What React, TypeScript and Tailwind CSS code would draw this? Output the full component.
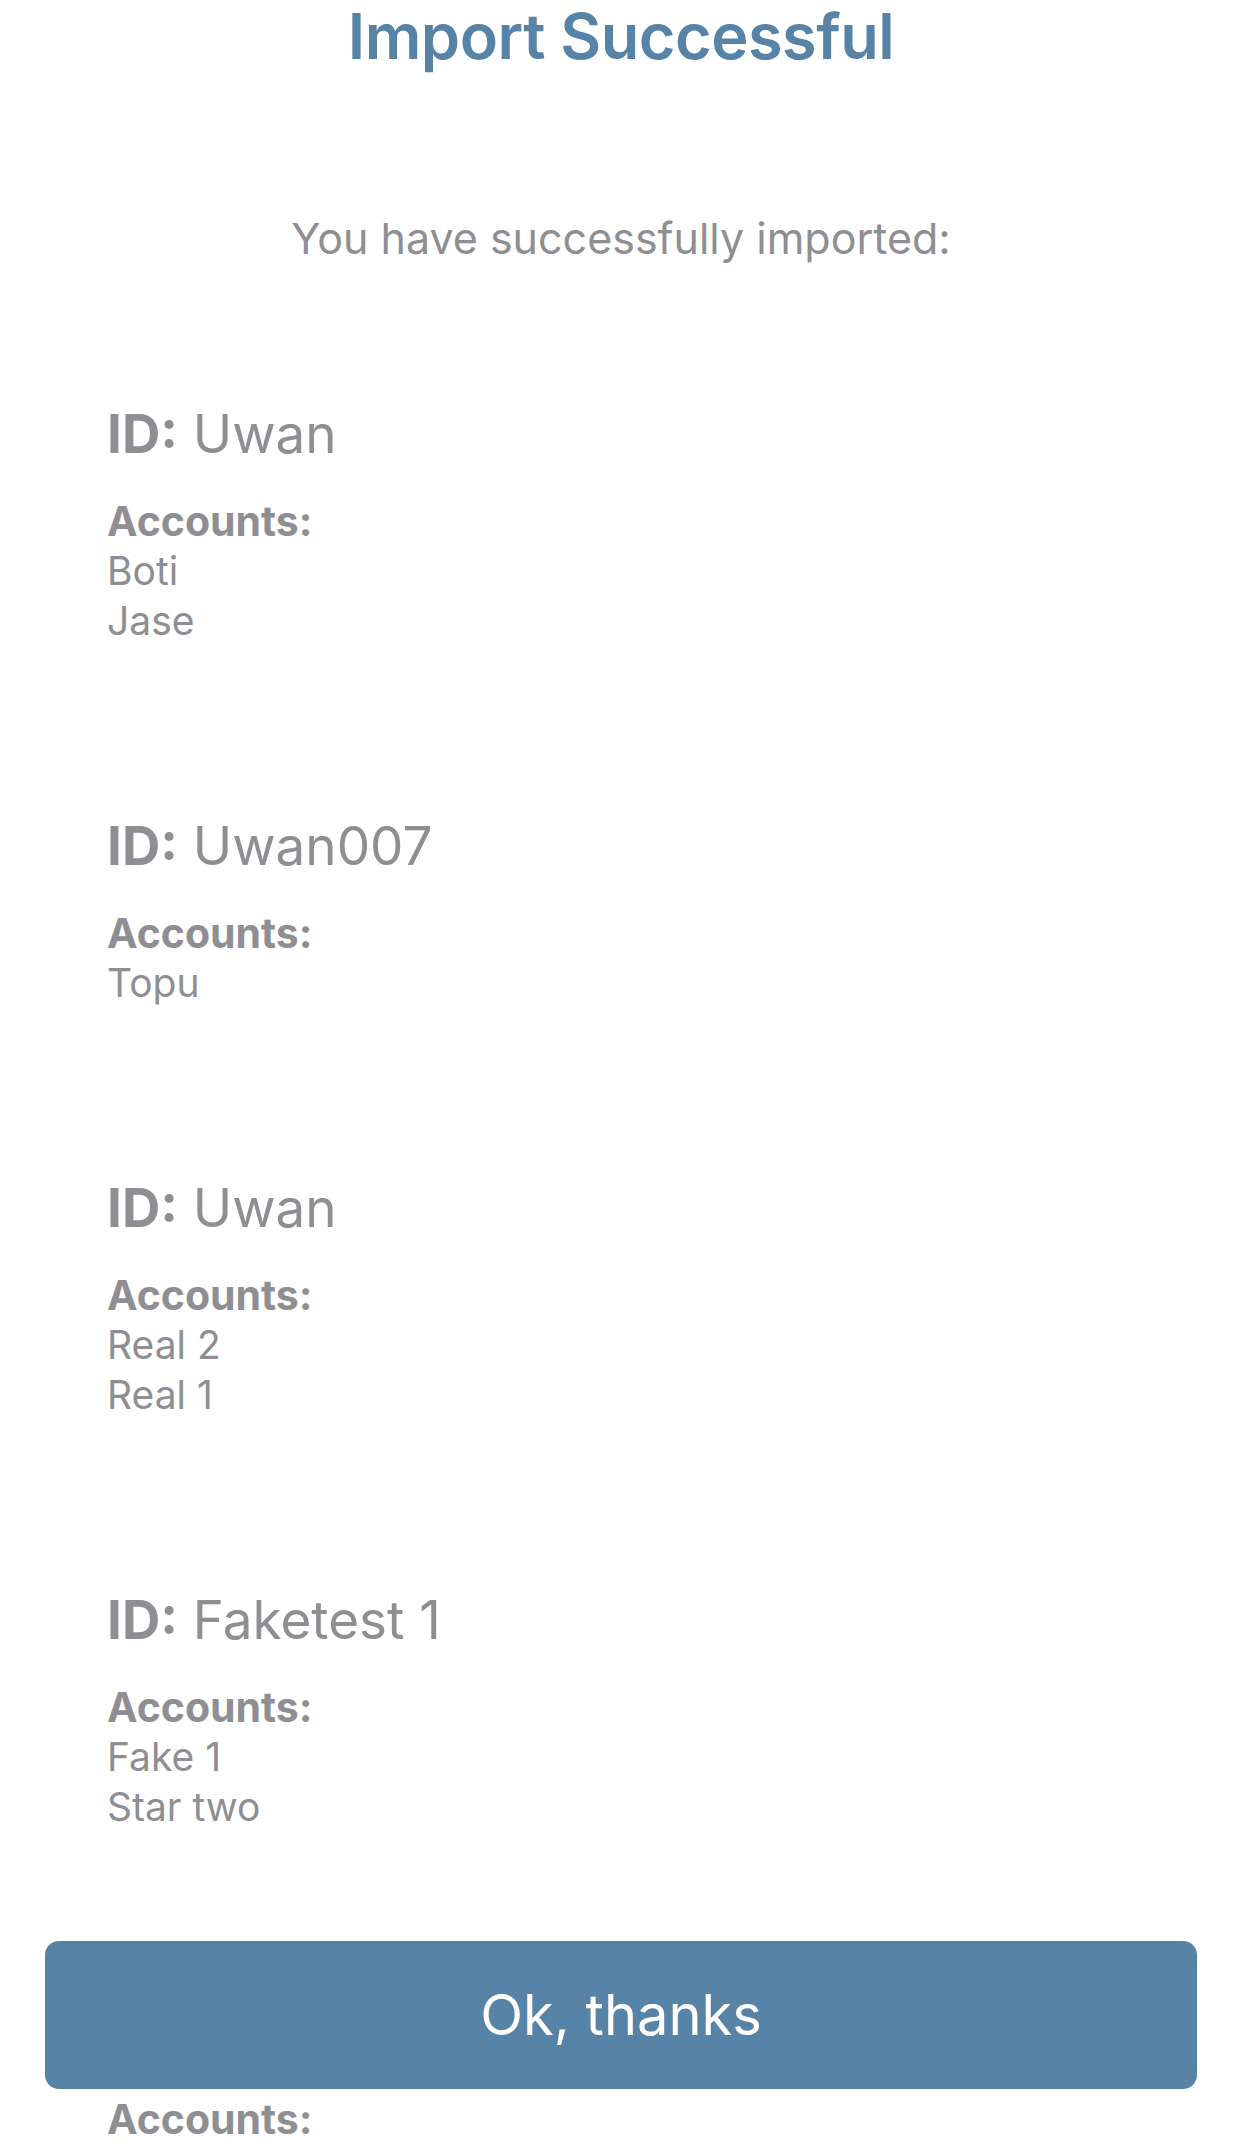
const ENTRIES = [
  { id: "Uwan", accounts: ["Boti", "Jase"] },
  { id: "Uwan007", accounts: ["Topu"] },
  { id: "Uwan", accounts: ["Real 2", "Real 1"] },
  { id: "Faketest 1", accounts: ["Fake 1", "Star two"] },
  { id: "Uwan007", accounts: ["Topu", "Boti"] },
];

export default function App() {
  return (
    <div
      className="relative h-[2150px] w-full overflow-hidden bg-white text-[#8e8e93]"
      style={{ fontFamily: "Inter, 'Noto Sans', 'Liberation Sans', sans-serif" }}
    >
      <h1 className="text-center text-[63px] font-semibold leading-[72px] text-[#5783a6] tracking-[-0.5px]">
        Import Successful
      </h1>
      <p className="mt-[141px] text-center text-[43px] leading-[50px]">You have successfully imported:</p>

      <div className="mt-[139px] flex flex-col gap-[168px] pl-[107px]">
        {ENTRIES.map((e, i) => (
          <div key={i}>
            <div className="text-[53px] leading-[64px]">
              <span className="font-bold">ID:</span> {e.id}
            </div>
            <div className="mt-[30px] text-[39px] leading-[50px]">
              <div className="text-[41px] font-bold">Accounts:</div>
              {e.accounts.map((a) => (
                <div key={a}>{a}</div>
              ))}
            </div>
          </div>
        ))}
      </div>

      {/* sticky action button over the list */}
      <button className="absolute bottom-[61px] left-[45px] right-[45px] h-[148px] rounded-[14px] bg-[#5783a6] text-[56px] text-white">
        Ok, thanks
      </button>
    </div>
  );
}
